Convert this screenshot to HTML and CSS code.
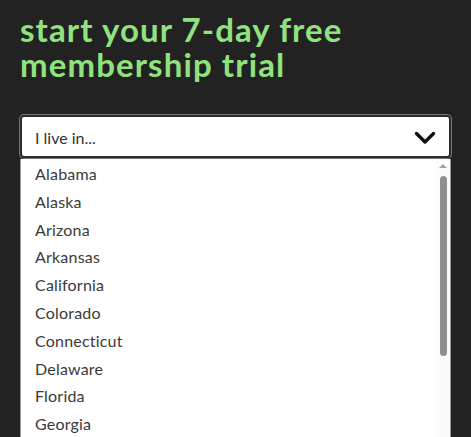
FILE: index.html
```html
<!DOCTYPE html>
<html lang="en">
<head>
<meta charset="utf-8">
<title>start your 7-day free membership trial</title>
<link rel="stylesheet" href="styles.css">
</head>
<body>
<main class="page">
  <h1 class="title">start your 7-day free membership trial</h1>
  <div class="field">
    <div class="select">
      <span class="select-label">I live in...</span>
      <svg class="chevron" viewBox="0 0 22 14" width="22" height="14" aria-hidden="true">
        <path d="M2.5 2.5 L11 11 L19.5 2.5" fill="none" stroke="#111" stroke-width="3.4" stroke-linecap="round" stroke-linejoin="round"/>
      </svg>
    </div>
    <div class="listbox">
      <ul class="options">
        <li>Alabama</li>
        <li>Alaska</li>
        <li>Arizona</li>
        <li>Arkansas</li>
        <li>California</li>
        <li>Colorado</li>
        <li>Connecticut</li>
        <li>Delaware</li>
        <li>Florida</li>
        <li>Georgia</li>
      </ul>
      <div class="scrollbar">
        <span class="arrow-up"></span>
        <span class="thumb"></span>
      </div>
    </div>
  </div>
</main>
</body>
</html>
```
FILE: styles.css
```css
html, body {
  margin: 0;
  padding: 0;
  background: #222222;
  height: 100%;
  overflow: hidden;
}
.page {
  padding: 12px 20px 0 20px;
  font-family: "Lato", "Liberation Sans", sans-serif;
}
.title {
  margin: 0;
  color: #91e27f;
  font-size: 33px;
  font-weight: 700;
  line-height: 35px;
  letter-spacing: 1.1px;
  width: 380px;
}
.field {
  margin-top: 33px;
  width: 431px;
}
.select {
  box-sizing: border-box;
  height: 43px;
  background: #ffffff;
  border: 2px solid #2c2c2c;
  border-radius: 4px;
  box-shadow: 0 0 0 1px #777;
  display: flex;
  align-items: center;
  justify-content: space-between;
  padding: 0 13px 0 13px;
}
.select-label {
  color: #333;
  font-size: 16px;
  padding-top: 2px;
}
.chevron {
  display: block;
  margin-top: 2px;
}
.listbox {
  box-sizing: border-box;
  background: #ffffff;
  border-left: 1px solid #9a9a9a;
  border-right: 1px solid #9a9a9a;
  display: flex;
  height: 290px;
  margin-top: 1px;
}
.options {
  list-style: none;
  margin: 0;
  padding: 1px 0 0 0;
  flex: 1;
}
.options li {
  color: #3a3a3a;
  font-size: 16px;
  letter-spacing: 0.2px;
  height: 27.8px;
  line-height: 27.8px;
  padding-left: 14px;
}
.scrollbar {
  width: 14px;
  background: #fbfbfb;
  display: flex;
  flex-direction: column;
  align-items: center;
  padding-top: 5px;
}
.arrow-up {
  width: 0;
  height: 0;
  border-left: 4px solid transparent;
  border-right: 4px solid transparent;
  border-bottom: 4px solid #a3a3a3;
}
.thumb {
  margin-top: 8px;
  width: 7px;
  height: 180px;
  border-radius: 4px;
  background: #8f8f8f;
}
```
